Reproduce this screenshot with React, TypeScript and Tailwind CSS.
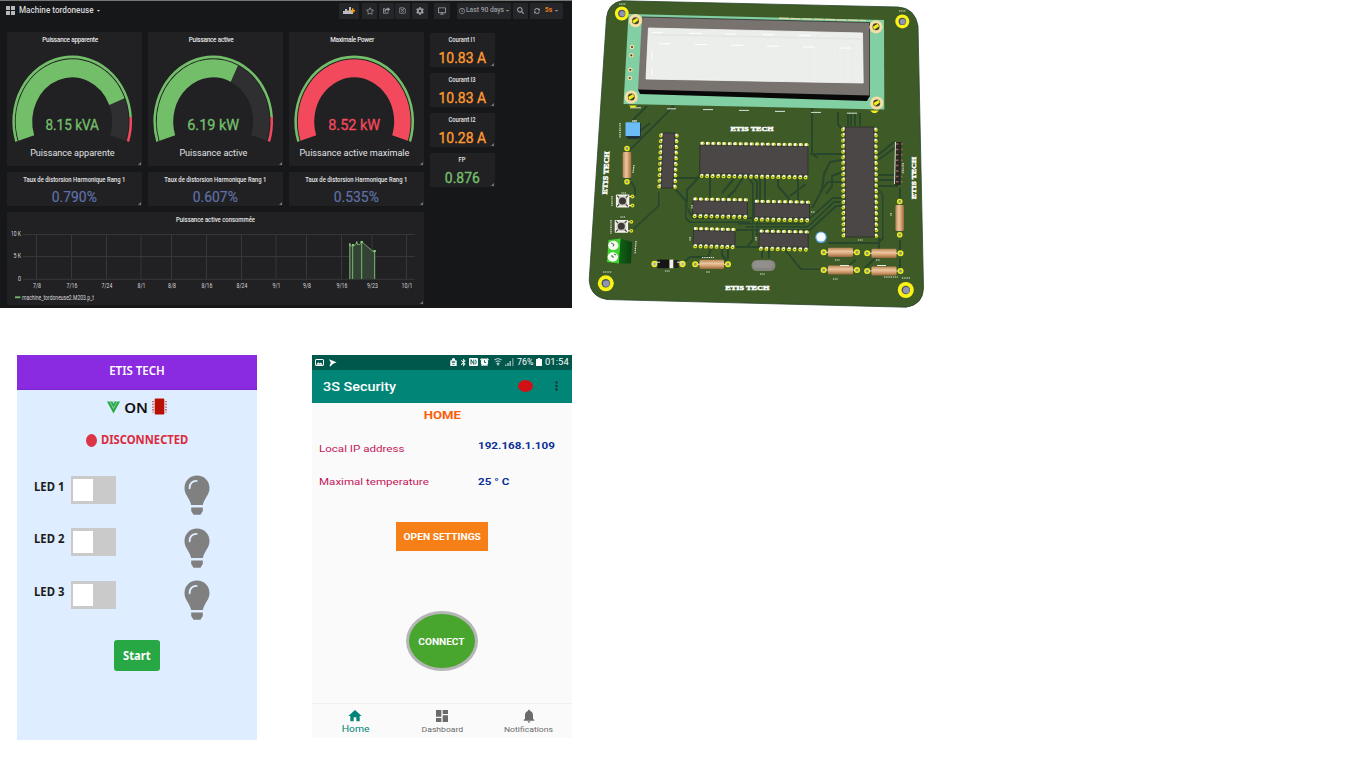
import React from "react";
import {
  FaCog,
  FaDesktop,
  FaRegClock,
  FaRegSave,
  FaRegStar,
  FaSearch,
  FaSyncAlt,
  FaCaretDown,
  FaShareSquare,
} from "react-icons/fa";
import {
  MdBluetooth,
  MdDashboard,
  MdHome,
  MdMoreVert,
  MdNotifications,
} from "react-icons/md";

const GREEN = "#73bf69";
const RED = "#f2495c";

/* ---------- Monitoring dashboard ---------- */

function arc(r: number, from: number, to: number) {
  const p = (a: number) => {
    const t = (a * Math.PI) / 180;
    return `${(-r * Math.cos(t)).toFixed(2)} ${(-r * Math.sin(t)).toFixed(2)}`;
  };
  return `M${p(from)}A${r} ${r} 0 ${to - from > 180 ? 1 : 0} 1 ${p(to)}`;
}

function Corner() {
  return (
    <svg className="absolute right-px bottom-px h-[3px] w-[3px]" viewBox="0 0 3 3">
      <path d="M3 0V3H0Z" fill="#77787a" />
    </svg>
  );
}

type GaugeProps = {
  title: string;
  titleW: number;
  value: string;
  valueW: number;
  label: string;
  labelW: number;
  end: number;
  color: string;
  limit: number;
};

function Gauge(g: GaugeProps) {
  return (
    <div className="relative h-[134px] w-[135px] rounded-[1px] bg-[#212124]">
      <svg className="block h-full w-full" viewBox="0 0 135 134" fontFamily="Roboto, sans-serif" textAnchor="middle">
        <text x="63.2" y="10" fontSize="6.4" fontWeight="500" fill="#e6e6e6" textLength={g.titleW}>{g.title}</text>
        <g transform="translate(65.2 89.5) scale(1 1.103)" fill="none">
          <path d={arc(48.2, -18, 198)} stroke="#2f2f32" strokeWidth="16.4" />
          <path d={arc(48.2, -18, g.end)} stroke={g.color} strokeWidth="16.4" />
          <path d={arc(58.6, -18, g.limit)} stroke={GREEN} strokeWidth="2.5" />
          {g.limit < 198 && <path d={arc(58.6, g.limit, 198)} stroke={RED} strokeWidth="2.5" />}
        </g>
        <text x="65.2" y="98" fontSize="15.2" fill={g.color} stroke={g.color} strokeWidth="0.35" textLength={g.valueW} lengthAdjust="spacingAndGlyphs">{g.value}</text>
        <text x="65.4" y="124.2" fontSize="9.8" fill="#e2e3e4" textLength={g.labelW} lengthAdjust="spacingAndGlyphs">{g.label}</text>
      </svg>
      <Corner />
    </div>
  );
}

function Distortion({ value }: { value: string }) {
  return (
    <div className="relative h-[34px] w-[135px] rounded-[1px] bg-[#212124]">
      <svg className="block h-full w-full" viewBox="0 0 135 34" fontFamily="Roboto, sans-serif" textAnchor="middle">
        <text x="67.3" y="9.6" fontSize="6.4" fontWeight="500" fill="#e6e6e6" textLength="102" lengthAdjust="spacingAndGlyphs">Taux de distorsion Harmonique Rang 1</text>
        <text x="67.3" y="30.3" fontSize="15.2" fill="#5f71a8" stroke="#5f71a8" strokeWidth="0.2" textLength="45" lengthAdjust="spacingAndGlyphs">{value}</text>
      </svg>
      <Corner />
    </div>
  );
}

function Stat({ title, titleW, value, valueW, color }: { title: string; titleW: number; value: string; valueW: number; color: string }) {
  return (
    <div className="relative h-[34px] w-[65px] rounded-[1px] bg-[#212124]">
      <svg className="block h-full w-full" viewBox="0 0 65 34" fontFamily="Roboto, sans-serif" textAnchor="middle">
        <text x="32" y="9.4" fontSize="6.4" fontWeight="500" fill="#e6e6e6" textLength={titleW} lengthAdjust="spacingAndGlyphs">{title}</text>
        <text x="32.3" y="30.2" fontSize="15.4" fill={color} stroke={color} strokeWidth="0.4" textLength={valueW} lengthAdjust="spacingAndGlyphs">{value}</text>
      </svg>
      <Corner />
    </div>
  );
}

const ticks: [number, string][] = [
  [36.5, "7/8"], [71.5, "7/16"], [106.5, "7/24"], [141, "8/1"], [171.5, "8/8"], [206.5, "8/16"],
  [241.5, "8/24"], [276, "9/1"], [306.5, "9/8"], [341.5, "9/16"], [372, "9/23"], [406.5, "10/1"],
];

function Consumption() {
  return (
    <div className="relative h-[93px] w-[417px] rounded-[1px] bg-[#212124]">
      <svg className="block h-full w-full" viewBox="7 212 417 93" fontFamily="Roboto, sans-serif">
        <text x="215.5" y="221.7" fontSize="6.4" fontWeight="500" fill="#e6e6e6" textAnchor="middle" textLength="79" lengthAdjust="spacingAndGlyphs">Puissance active consommée</text>
        <g stroke="#37373a" strokeWidth="1">
          {ticks.map(([x]) => <path key={x} d={`M${x} 234V279`} />)}
          <path d="M23 234.5H415M23 256.5H415M23 279.3H415" />
        </g>
        <g fontSize="6.4" fill="#d8d8d8">
          <text x="11" y="236" textLength="10" lengthAdjust="spacingAndGlyphs">10 K</text>
          <text x="13.5" y="258" textLength="7.5" lengthAdjust="spacingAndGlyphs">5 K</text>
          <text x="18" y="280.7" textLength="3" lengthAdjust="spacingAndGlyphs">0</text>
          <g textAnchor="middle">
            {ticks.map(([x, t]) => (
              <text key={t} x={x + 0.5} y="287.5" textLength={t.length === 4 ? 10.8 : 8} lengthAdjust="spacingAndGlyphs">{t}</text>
            ))}
          </g>
          <text x="22" y="299.6" textLength="72" lengthAdjust="spacingAndGlyphs">machine_tordoneuse2.M203.p_t</text>
        </g>
        <path d="M350 279V244L353 246L356 243L357 244.5L361.5 242L374.5 251V279Z" fill="#334234" />
        <path d="M350 246H354L357 242.5V244.5H360L362 242L373 251.5H375" fill="none" stroke="#73a466" strokeWidth="0.9" />
        <path d="M349.8 279V243.5M352.6 279V244M361.6 279V242M374.6 279V250" stroke="#6fa363" strokeWidth="1.2" />
        <path d="M349 244.5h1.6M352 245h2M356 242.5h1.4M360.5 242h2.5M373.4 251h2.4" stroke="#86c978" strokeWidth="2" />
        <path d="M15 297.3h5.4" stroke={GREEN} strokeWidth="1.8" />
      </svg>
      <Corner />
    </div>
  );
}

function Tool({ className, children }: { className: string; children: React.ReactNode }) {
  return (
    <div className={`flex h-4 items-center justify-center rounded-[1px] bg-[#242629] text-[7px] text-[#9b9da0] ${className}`}>
      {children}
    </div>
  );
}

function Dashboard() {
  return (
    <section className="flex h-[308px] w-[572px] flex-col border-t border-[#777] bg-[#161719] font-[Roboto,sans-serif]">
      <header className="flex h-[31px] items-start pt-[1.5px]">
        <div className="-mt-[0.5px] flex h-4 w-[333px] items-center pl-1.5">
          <svg className="h-[9px] w-[9px]" viewBox="0 0 9 9" fill="#b8b9bb">
            <path d="M0 0h4v4H0zM5 0h4v4H5zM0 5h4v4H0zM5 5h4v4H5z" />
          </svg>
          <span className="ml-1 inline-block w-[75px] origin-left scale-x-[0.905] text-[9px] leading-4 font-medium whitespace-nowrap text-[#d8d9da]">Machine tordoneuse</span>
          <FaCaretDown className="ml-[2px] h-[5px] w-[5px] text-[#d8d9da]" />
        </div>
        <div className="ml-1.5 flex">
          <Tool className="w-5">
            <svg className="h-[9px] w-3" viewBox="0 0 12 9">
              <path d="M1 5v3M3 3v5M5 4.5v3.5M7 1v7M9 5v3" stroke="#d8d9da" strokeWidth="1.7" />
              <path d="M9.7 2.3v4.8M7.3 4.7h4.8" stroke="#f9a11f" strokeWidth="1.5" />
            </svg>
          </Tool>
          <Tool className="ml-[3px] w-[15px]"><FaRegStar className="h-2 w-2" /></Tool>
          <Tool className="ml-[2px] w-[15px]"><FaShareSquare className="h-[7px] w-[7px]" /></Tool>
          <Tool className="ml-[1px] w-[15px]"><FaRegSave /></Tool>
          <Tool className="ml-[2px] w-4"><FaCog className="h-2 w-2" /></Tool>
          <Tool className="ml-[6px] w-4"><FaDesktop className="h-2 w-2" /></Tool>
          <Tool className="ml-[7px] w-[54px]">
            <FaRegClock className="h-1.5 w-1.5 shrink-0" />
            <span className="inline-block w-[38px] origin-left scale-x-[0.99] pl-px text-[6.8px] font-medium whitespace-nowrap">Last 90 days</span>
            <FaCaretDown className="ml-[2px] h-[5px] w-[5px] shrink-0" />
          </Tool>
          <Tool className="ml-[2px] w-[15px]"><FaSearch className="h-[7px] w-[7px]" /></Tool>
          <Tool className="ml-[2px] w-[33px]">
            <FaSyncAlt className="h-1.5 w-1.5" />
            <span className="mr-0.5 ml-[5px] text-[6.8px] font-bold text-[#eb7b18]">5s</span>
            <FaCaretDown className="h-[5px] w-[5px]" />
          </Tool>
        </div>
      </header>
      <div className="flex gap-1.5 pl-[7px]">
        <div className="flex w-[417px] flex-col gap-1.5">
          <div className="flex justify-between">
            <Gauge title="Puissance apparente" titleW={56} value="8.15 kVA" valueW={53.5} label="Puissance apparente" labelW={84.5} end={158} color={GREEN} limit={176} />
            <Gauge title="Puissance active" titleW={45} value="6.19 kW" valueW={52} label="Puissance active" labelW={68} end={116} color={GREEN} limit={176} />
            <Gauge title="Maximale Power" titleW={44} value="8.52 kW" valueW={52} label="Puissance active maximale" labelW={110} end={198} color={RED} limit={198} />
          </div>
          <div className="flex justify-between">
            <Distortion value="0.790%" />
            <Distortion value="0.607%" />
            <Distortion value="0.535%" />
          </div>
          <Consumption />
        </div>
        <div className="flex flex-col gap-1.5 pt-px">
          <Stat title="Courant I1" titleW={27} value="10.83 A" valueW={47.5} color="#ff9830" />
          <Stat title="Courant I3" titleW={27} value="10.83 A" valueW={47.5} color="#ff9830" />
          <Stat title="Courant I2" titleW={27} value="10.28 A" valueW={47.5} color="#ff9830" />
          <Stat title="FP" titleW={7} value="0.876" valueW={35} color={GREEN} />
        </div>
      </div>
    </section>
  );
}

/* ---------- Circuit board ---------- */

function Pad({ x, y }: { x: number; y: number }) {
  return (
    <g>
      <circle cx={x} cy={y} r="1.9" fill="#e6e41f" />
      <circle cx={x} cy={y} r="0.8" fill="#566b2c" />
    </g>
  );
}

function ChipH({ x, y, w, h, n, dy = 1 }: { x: number; y: number; w: number; h: number; n: number; dy?: number }) {
  const step = (w - 4) / (n - 1);
  const pins = Array.from({ length: n }, (_, i) => ({ px: x + 2 + i * step, o: (dy * i) / n }));
  return (
    <g>
      {pins.map(({ px, o }) => (
        <g key={px}>
          <Pad x={px + 0.7} y={y - 1.5 + o} />
          <Pad x={px - 0.4} y={y + h + 2.6 + o} />
          <path d={`M${px - 0.2} ${y - 3 + o}v3.2M${px} ${y + h + o - 0.5}v2.6`} stroke="#fbfbf2" strokeWidth="2.5" />
        </g>
      ))}
      <path d={`M${x} ${y}L${x + w} ${y + dy}V${y + h + dy}L${x - 0.5} ${y + h}Z`} fill="#4b4746" stroke="#232323" strokeWidth="0.6" />
    </g>
  );
}

function ChipV({ x, y, w, h, n, dx = 0 }: { x: number; y: number; w: number; h: number; n: number; dx?: number }) {
  const step = (h - 4) / (n - 1);
  const pins = Array.from({ length: n }, (_, i) => ({ py: y + 2 + i * step, o: (dx * i) / n }));
  return (
    <g>
      {pins.map(({ py, o }) => (
        <g key={py}>
          <Pad x={x - 2 + o} y={py + 0.5} />
          <Pad x={x + w + 1.8 + o} y={py + 0.8} />
          <path d={`M${x - 2 + o} ${py - 0.5}h2.3M${x + w - 0.5 + o} ${py - 0.2}h2.9`} stroke="#fbfbf2" strokeWidth="2.3" />
        </g>
      ))}
      <path d={`M${x} ${y}H${x + w}L${x + w + dx} ${y + h}H${x + dx}Z`} fill="#4b4746" stroke="#232323" strokeWidth="0.6" />
    </g>
  );
}

function ResistorH({ x, y, w = 25 }: { x: number; y: number; w?: number }) {
  return (
    <g>
      <path d={`M${x - 4} ${y}H${x + w + 4}`} stroke="#c9c9b4" strokeWidth="1.2" />
      {[x - 4.3, x + w + 4].map((c) => (
        <circle key={c} cx={c} cy={y} r="2.3" fill="#8d9a72" stroke="#f0ec20" strokeWidth="1.5" />
      ))}
      <rect x={x} y={y - 4.6} width={w} height="9.2" rx="1.4" fill="url(#resH)" />
    </g>
  );
}

function ResistorV({ x, y, h = 26 }: { x: number; y: number; h?: number }) {
  return (
    <g>
      {[y - 3.5, y + h + 3.8].map((c) => (
        <circle key={c} cx={x} cy={c} r="2.1" fill="#8d9a72" stroke="#f0ec20" strokeWidth="1.4" />
      ))}
      <rect x={x - 4.3} y={y} width="8.6" height={h} rx="1.4" fill="url(#resV)" />
    </g>
  );
}

function Screw({ x, y, r }: { x: number; y: number; r: number }) {
  return (
    <g>
      <circle cx={x} cy={y} r={r} fill="#fbf316" />
      <circle cx={x} cy={y} r={r * 0.53} fill="#4b5560" />
      <circle cx={x + 0.4} cy={y + 0.3} r={r * 0.4} fill="#9294b4" />
    </g>
  );
}

function LcdHole({ x, y }: { x: number; y: number }) {
  return (
    <g>
      <circle cx={x} cy={y} r="6.6" fill="#f5dfa6" />
      <circle cx={x} cy={y} r="3.5" fill="#40432a" />
      <path d={`M${x - 3.2} ${y}l5 -3 1.4 2.4 -5 3.6Z`} fill="#f4ec1c" />
    </g>
  );
}

function PushButton({ x, y }: { x: number; y: number }) {
  return (
    <g>
      {[-4.5, 4.5].map((d) => (
        <g key={d}>
          <Pad x={x + 10} y={y + d} />
          <path d={`M${x + 6} ${y + d}h2.5`} stroke="#eee" strokeWidth="1.2" />
        </g>
      ))}
      <rect x={x - 6.6} y={y - 6.4} width="13.4" height="12.8" rx="0.8" fill="#f3f2ea" />
      <rect x={x - 4.6} y={y - 4.6} width="9.2" height="9.2" fill="#c8c7bf" />
      <circle cx={x} cy={y} r="3.5" fill="#3d3938" />
      <path d={`M${x - 5.4} ${y - 5.4}l2 2M${x + 5.4} ${y - 5.4}l-2 2M${x - 5.4} ${y + 5.4}l2 -2M${x + 5.4} ${y + 5.4}l-2 -2`} stroke="#3e3a37" strokeWidth="1.2" />
    </g>
  );
}

function Board() {
  return (
    <svg className="block h-[310px] w-[345px]" viewBox="585 0 345 310">
      <defs>
        <linearGradient id="resH" x1="0" y1="0" x2="0" y2="1">
          <stop offset="0" stopColor="#b78450" />
          <stop offset="0.4" stopColor="#ecc5a0" />
          <stop offset="0.65" stopColor="#d7a475" />
          <stop offset="1" stopColor="#99683c" />
        </linearGradient>
        <linearGradient id="resV" x1="0" y1="0" x2="1" y2="0">
          <stop offset="0" stopColor="#b78450" />
          <stop offset="0.4" stopColor="#ecc5a0" />
          <stop offset="0.65" stopColor="#d7a475" />
          <stop offset="1" stopColor="#99683c" />
        </linearGradient>
        <linearGradient id="term" x1="0" y1="0" x2="1" y2="0">
          <stop offset="0" stopColor="#126317" />
          <stop offset="1" stopColor="#093f0d" />
        </linearGradient>
      </defs>

      <path d="M622 0.8L898 7Q915 8 918 26L923.5 288Q923 305 906 307.2L607 299.5Q590 297 589.2 280L597.8 150L606.5 18Q608 3 622 0.8Z" fill="#3d5a27" stroke="#2c4630" strokeWidth="0.8" />

      {/* traces */}
      <g fill="none" stroke="#27462b" strokeWidth="2">
        <path d="M674 106L630 150M647 106L632 121M650 123L640 131" />
        <path d="M659 192V206L634 229M631 182L635 188V196M676 190L686 201V218L690 222H750" />
        <path d="M676 178H697L701 174M702 174L687 190V208L693 218H752M710 174V198M738 174L722 193M728 197L735 190L745 174" />
        <path d="M746 174L753 184V240L747 247M751 174L757 182V236M760 176V200M765 176V201M778 176V186L790 200M798 176V200M790 196L806 184" />
        <path d="M712 246L708 257H690L684 262M722 247V255L727 261M728 247V259M732 247H760" />
        <path d="M762 248V258M769 248V258M784 248L801 269H820M738 224H804L833 198H842M746 227H808L834 202H842M734 230H810L836 206H842" />
        <path d="M810 154H842M812 108V154L818 158M838 112V124L842 130M848 113V126M851 113V126M855 113V126M860 113V126" />
        <path d="M878 155L894 142M878 160L896 147M878 175H894M878 180H896M878 186H898M900 188V200M878 190L883 195V238L878 243H828" />
        <path d="M842 160L830 162L824 174L822 190L812 208M842 172L832 176V186L826 194M842 182H828L820 192" />
        <path d="M856 260L848 266M879 238V254L865 268M900 240V252M900 258V270" />
      </g>
      <g fill="none" stroke="#4d6b33" strokeWidth="0.5">
        <path d="M675 107L631 151M660 192V206L635 229M687 201V217L691 221H750M754 184V240M739 225H804L834 199M747 228H808L835 203M879 191L884 196V238M785 248L802 268H820" />
      </g>

      {/* LCD module */}
      <path d="M628.5 14L884 20L884.3 109.5L623.5 104Z" fill="#81cfa3" />
      <path d="M642 17L869.5 22.5V97L638 90.5Z" fill="#78736f" />
      <path d="M638 89.5L870 95.5L867 101L640 94Z" fill="#080808" />
      <path d="M642 17L869.5 22.5V97" fill="none" stroke="#2c2c2c" strokeWidth="0.8" />
      <path d="M648.5 28L862.5 33L863.2 83L646 79Z" fill="#ebeeea" stroke="#f8f9f7" strokeWidth="0.8" />
      <path d="M652 34.5L861 39" stroke="#e3e6e6" strokeWidth="1.6" />
      <path d="M652 32.8h11M689 33.3h12M725 34h11M762 34.8h12M799 35.4h12M659 43.8h11M695 44.5h12M731 45.2h12M767 46.2h12M803 47h12M839 48h12M652 51v8M652 69v6" stroke="#fff" strokeWidth="1" />
      <path d="M720 46L690 72M742 46L712 75M810 48V81M838 44V80M845 44V80M852 44V80" stroke="#e7e9e9" strokeWidth="0.6" />
      <path d="M779 18.2L866 20.6" stroke="#dfd9a6" strokeWidth="1.3" strokeDasharray="10 1.5" />
      <path d="M667 108.8h9M703 109.6h10M739 110.4h10M775 111.4h10M811 112.4h10M847 113.2h10M630 107.8h11" stroke="#d8e4d4" strokeWidth="1" />
      <path d="M629 105.5h8l-2.5 2.2h-3ZM870 110.5h9l-3 2.4h-3Z" fill="#f4ec1c" />
      <LcdHole x={635.5} y={20.7} />
      <LcdHole x={631.3} y={97} />
      <LcdHole x={876} y={26.8} />
      <LcdHole x={876.7} y={103} />
      {[[632, 47], [631.3, 55.3], [630.3, 69.8], [629.8, 78]].map(([x, y]) => (
        <g key={y}>
          <circle cx={x} cy={y} r="2.3" fill="#f5dfa6" />
          <circle cx={x} cy={y} r="1.1" fill="#4c4123" />
        </g>
      ))}

      {/* mounting holes */}
      <Screw x={621.8} y={13.5} r={6.9} />
      <Screw x={902.3} y={21.4} r={7} />
      <Screw x={605.8} y={283.3} r={8} />
      <Screw x={905.8} y={290} r={8} />

      {/* chips */}
      <ChipV x={663} y={133} w={12} h={55} n={10} dx={-2} />
      <ChipH x={700} y={145} w={108} h={28.5} n={20} dy={1.5} />
      <ChipV x={845} y={127} w={29} h={110} n={20} dx={0.5} />
      <ChipH x={693} y={200.7} w={54.5} h={13} n={10} />
      <ChipH x={754.5} y={203} w={55} h={14} n={10} />
      <ChipH x={693.5} y={230.3} w={41.5} h={13.5} n={8} />
      <ChipH x={759.2} y={232.8} w={49} h={13.5} n={9} />

      {/* pin header */}
      <path d="M896 142H901.5L900.5 185H895Z" fill="#2b2623" />
      <path d="M895.5 142L894.5 184" stroke="#efefe8" strokeWidth="0.9" />
      {[0, 1, 2, 3, 4, 5, 6, 7].map((i) => (
        <path key={i} d={`M896 ${144 + i * 5.4}h2.5M901 ${144 + i * 5.4}h1.6`} stroke="#8b6b55" strokeWidth="1.5" />
      ))}

      {/* passives */}
      <ResistorV x={627} y={152} />
      <ResistorV x={899.7} y={205} />
      <ResistorH x={699.5} y={264.3} w={24.5} />
      <ResistorH x={828} y={252.3} />
      <ResistorH x={871.5} y={253.3} />
      <ResistorH x={828} y={270} />
      <ResistorH x={871.5} y={271} />
      <circle cx="654.5" cy="264" r="2.4" fill="#b9b9b0" stroke="#f0ec20" strokeWidth="1.5" />
      <circle cx="682.5" cy="264" r="2.4" fill="#b9b9b0" stroke="#f0ec20" strokeWidth="1.5" />
      <rect x="657.5" y="259.6" width="12" height="8.6" fill="#151515" />
      <rect x="669.5" y="259.6" width="4" height="8.6" fill="#f0eee7" />
      <rect x="673.5" y="260" width="5" height="8" fill="#24221f" />
      <path d="M656 262.3h4M677 262.3h5" stroke="#e9e9df" strokeWidth="1.1" />
      <rect x="751.5" y="260" width="24" height="11" rx="5.5" fill="#85847f" />
      <rect x="753" y="261" width="20" height="7" rx="3.5" fill="#908f8b" />
      <circle cx="821" cy="237.3" r="5.8" fill="#55a9e0" />
      <circle cx="821" cy="237" r="4.6" fill="#f5fbff" />
      <path d="M638 121L641 124V137L638 139H628L626 136Z" fill="#20323d" />
      <rect x="625.5" y="122.3" width="14.5" height="13.7" fill="#6cbdf7" />
      <path d="M632 121h5" stroke="#e9ead4" strokeWidth="1.2" />
      <PushButton x={622.5} y={201} />
      <PushButton x={621.3} y={226.3} />
      <path d="M608.5 240L621 238.5L619 263.5L607 262Z" fill="#40d32f" />
      <path d="M620.5 238.8L632 242L631 263.5H619Z" fill="url(#term)" />
      <ellipse cx="613.3" cy="245.5" rx="5.2" ry="4.7" fill="#f3fbef" />
      <ellipse cx="612.8" cy="257" rx="5.2" ry="4.7" fill="#f3fbef" />
      <path d="M611 243l3 1.5-1 2M611 256h2v2M614 254l2 1" stroke="#3b573a" strokeWidth="0.9" fill="none" />

      {/* silkscreen */}
      <g fill="#fff" fontFamily="Liberation Serif, serif" fontWeight="700" fontSize="7" textAnchor="middle" stroke="#fff" strokeWidth="0.5">
        <text x="752" y="131.1" textLength="43" lengthAdjust="spacingAndGlyphs">ETIS TECH</text>
        <text x="747.3" y="289.8" textLength="44" lengthAdjust="spacingAndGlyphs">ETIS TECH</text>
        <text transform="translate(608.2 173) rotate(-87)" textLength="43" lengthAdjust="spacingAndGlyphs">ETIS TECH</text>
        <text transform="translate(916 178) rotate(-90)" textLength="42" lengthAdjust="spacingAndGlyphs">ETIS TECH</text>
      </g>
      <g stroke="#e6eadf" strokeWidth="1.2" strokeDasharray="1.4 0.8" fill="none">
        <path d="M620 123V138M634 165l-1 8M612 196v10M611 220v14M636 241l-1 13M626 193h-5M625 217h-5M665 271h5M702 257.5h12M706 272h4M760 274h5M835 260h5M833 279h5M876 260h4M884 277h14M891 213v3M903 163v11M603 272h9M619 4h7M899 11h7M858 240h5M692 205v4M690 237v4M756 237v4M811 212h4M902 278h8" />
        <path d="M840 265.5h9M877 265.5h9" strokeDasharray="none" />
      </g>
    </svg>
  );
}

/* ---------- LED control page ---------- */

function Bulb() {
  return (
    <svg className="h-[41px] w-[26px]" viewBox="0 0 26 41">
      <path d="M13 0.5C5.8 0.5 0.5 6 0.5 13C0.5 20 5.5 22.5 7.2 30H18.8C20.5 22.5 25.5 20 25.5 13C25.5 6 20.2 0.5 13 0.5Z" fill="#808080" />
      <path d="M7.2 32.5H18.8V36L16.5 39.8H9.5L7.2 36Z" fill="#808080" />
      <path d="M5.6 13.2C5.6 8.5 8.5 6 12.6 5.9" stroke="#deedff" strokeWidth="1.9" fill="none" strokeLinecap="round" />
    </svg>
  );
}

function LedRow({ name }: { name: string }) {
  return (
    <div className="flex h-[52.5px] items-start pl-[17px]">
      <span className="inline-block w-[37px] origin-left scale-x-[0.93] pt-[0.6px] text-[12.2px] leading-[22px] font-bold whitespace-nowrap text-[#1c1c1c]">{name}</span>
      <div className="mt-[0.5px] flex h-7 w-[45px] items-center bg-[#cacaca] pl-[2px]">
        <div className="h-[22px] w-5 bg-white" />
      </div>
      <div className="ml-[68px]"><Bulb /></div>
    </div>
  );
}

function LedPage() {
  return (
    <section className="flex h-[385px] w-[240px] flex-col bg-[#deedff] font-['Noto_Sans','Open_Sans',sans-serif]">
      <header className="flex h-[35px] items-center justify-center border-b border-[#7b25cc] bg-[#8a2be2] pb-[3px] text-[12px] font-semibold text-white">
        <span className="inline-block scale-x-[0.96]">ETIS TECH</span>
      </header>
      <div className="flex h-[34px] items-center justify-center gap-[4px] text-[15px] font-semibold text-[#111]">
        <svg className="h-[13px] w-[13px]" viewBox="0 0 13 13">
          <path d="M0 0.5H13L6.5 12.5Z" fill="#28a745" />
          <path d="M2.9 0.5L6.5 7.6L10.1 0.5" stroke="#b9dfcf" strokeWidth="0.7" fill="none" />
          <path d="M5.4 0.5L6.5 2.9L7.6 0.5Z" fill="#deedff" />
        </svg>
        <span className="inline-block">ON</span>
        <svg className="mb-px h-[17px] w-[15px]" viewBox="0 0 15 17">
          <path d="M1 3V14.5M14 3V14.5" stroke="#c9382e" strokeWidth="1.4" strokeDasharray="1.3 1.4" />
          <rect x="2.7" y="0.5" width="9.6" height="16" rx="1" fill="#b80f05" />
        </svg>
      </div>
      <div className="flex h-8 items-center justify-center gap-1 text-[11.7px] font-bold text-[#dc2a3c]">
        <div className="h-[13px] w-[11px] rounded-[50%] bg-[#dc3545]" />
        <span className="-mr-[2px] inline-block w-[90px] origin-left scale-x-[0.96] whitespace-nowrap">DISCONNECTED</span>
      </div>
      <div className="flex flex-col pt-[19px]">
        <LedRow name="LED 1" />
        <LedRow name="LED 2" />
        <LedRow name="LED 3" />
      </div>
      <button className="mt-[7.5px] flex h-[31px] w-[46px] items-center justify-center self-center rounded-[3px] bg-[#28a745] pt-px text-[12px] font-bold text-white">
        <span className="inline-block scale-x-[0.93]">Start</span>
      </button>
    </section>
  );
}

/* ---------- Security phone app ---------- */

function Tab({ icon, label, active, className }: { icon: React.ReactNode; label: string; active?: boolean; className: string }) {
  return (
    <div className={`flex flex-1 flex-col items-center pt-1 ${active ? "text-[#008577]" : "text-[#6b6b6b]"}`}>
      {icon}
      <span className={`inline-block whitespace-nowrap ${className}`}>{label}</span>
    </div>
  );
}

function StatusIcons() {
  return (
    <>
      <svg className="h-2 w-[7px]" viewBox="0 0 7 8">
        <path d="M0.3 2.6L1.8 2.2C1.9 0.8 2.6 0 3.5 0S5.1 0.8 5.2 2.2L6.7 2.6V8H0.3Z" fill="#fff" />
        <path d="M2.2 3.4h2.6v1.2h-2.6ZM2.3 6.4h2.4" stroke="#00574b" strokeWidth="0.7" fill="none" />
      </svg>
      <MdBluetooth className="ml-[2px] h-[9px] w-[9px]" />
      <svg className="ml-px h-2 w-[9px]" viewBox="0 0 9 8">
        <rect width="9" height="8" rx="1" fill="#fff" />
        <path d="M2 6.5V1.6L4.8 6.3V1.6M6.5 1.8Q8 4 6.5 6.3" stroke="#00574b" strokeWidth="0.9" fill="none" />
      </svg>
      <svg className="ml-[2px] h-2 w-[9px]" viewBox="0 0 9 8">
        <circle cx="4.5" cy="4.2" r="3.6" fill="#fff" />
        <path d="M0.4 2L2.4 0.4M8.6 2L6.6 0.4M1.6 7.7l1-1M7.4 7.7l-1-1" stroke="#fff" strokeWidth="1.2" />
        <path d="M4.5 2.2V4.4H6.2" stroke="#00574b" strokeWidth="0.9" fill="none" />
      </svg>
      <svg className="ml-[5px] h-2 w-2" viewBox="0 0 8 8" fill="none" stroke="#c6dcd9">
        <path d="M0.3 1.8Q4 -0.8 7.7 1.8M1.6 3.7Q4 2 6.4 3.7" strokeWidth="1" />
        <path d="M2.6 5.4L4 4.8L5.4 5.4L4 7.6Z" fill="#c6dcd9" strokeWidth="0.4" />
      </svg>
      <svg className="ml-[3px] h-2 w-[9px]" viewBox="0 0 9 8">
        <path d="M0.8 8V6.5M3 8V5M5.2 8V3" stroke="#b8d2ce" strokeWidth="1.3" />
        <path d="M7.8 8V0.2" stroke="#6e9b95" strokeWidth="1.5" />
      </svg>
    </>
  );
}

function Phone() {
  return (
    <section className="flex h-[383px] w-[260px] flex-col bg-[#fafafa] font-[Roboto,sans-serif]">
      <div className="flex h-[15px] items-center bg-[#00574b] text-[9px] text-white">
        <svg className="ml-[3px] h-[7px] w-[9px]" viewBox="0 0 9 7">
          <rect x="0.5" y="0.5" width="8" height="6" rx="0.6" fill="none" stroke="#fff" strokeWidth="1" />
          <path d="M1.2 5.8L3.2 3.2L4.6 4.6L5.8 3.4L7.8 5.8Z" fill="#fff" />
        </svg>
        <svg className="ml-[5px] h-2 w-2" viewBox="0 0 8 8" fill="#fff"><path d="M0 0.2L7.6 3.2L4.2 4.8L1 7.8L0.6 6.6L1.8 3.8Z" /></svg>
        <div className="ml-auto flex items-center pr-[3px]">
          <StatusIcons />
          <span className="ml-[3px] inline-block w-[19px] origin-left text-[8.8px]">76%</span>
          <svg className="h-2 w-[6px]" viewBox="0 0 6 8">
            <path d="M1.8 0h2.4v1H6v7H0V1h1.8Z" fill="#fff" />
          </svg>
          <span className="ml-[3px] w-6 text-[9.4px] tracking-[0.1px]">01:54</span>
        </div>
      </div>
      <div className="flex h-[33px] items-center bg-[#008577]">
        <span className="ml-[11px] inline-block w-[180px] origin-left scale-x-[1.2] text-[12px] font-medium text-white">3S Security</span>
        <div className="mb-px ml-[15px] h-3 w-[15px] rounded-[50%] bg-[#d01217]" />
        <MdMoreVert className="mb-px ml-[16px] h-[14px] w-[15px] text-[#17332f]" />
      </div>
      <div className="flex h-[25px] items-center justify-center pt-px text-[11.5px] font-bold text-[#fd5d08]">
        <span className="inline-block scale-x-[1.14]">HOME</span>
      </div>
      <div className="flex h-[36px] items-center pl-[6.5px] whitespace-nowrap text-[#c2185b]">
        <span className="inline-block w-[159.5px] pt-[6px] text-[9.8px]"><span className="inline-block origin-left scale-x-[1.18]">Local IP address</span></span>
        <span className="inline-block origin-left scale-x-[1.2] pt-px text-[9.7px] font-bold text-[#0b2f95]">192.168.1.109</span>
      </div>
      <div className="flex h-[36px] items-center pt-px pl-[6.5px] whitespace-nowrap text-[#c2185b]">
        <span className="inline-block w-[159.5px] text-[9.8px]"><span className="inline-block origin-left scale-x-[1.18]">Maximal temperature</span></span>
        <span className="inline-block origin-left scale-x-[1.2] text-[9.7px] font-bold text-[#0b2f95]">25 ° C</span>
      </div>
      <button className="mt-[22px] flex h-[29px] w-[92px] items-center justify-center self-center bg-[#f77f18] pt-0.5 text-[8.5px] font-bold whitespace-nowrap text-white">
        <span className="inline-block scale-x-[1.2]">OPEN SETTINGS</span>
      </button>
      <button className="mt-[60px] mr-px flex h-[60px] w-[72px] items-center justify-center self-center rounded-[50%] border-[3px] border-[#b6b6b6] bg-[#48a52d] pt-0.5 text-[8.5px] font-bold text-white">
        <span className="inline-block scale-x-[1.19]">CONNECT</span>
      </button>
      <nav className="mt-auto flex h-[35px] border-t border-[#f0f0f0]">
        <Tab active icon={<MdHome className="h-4 w-4" />} label="Home" className="scale-x-[1.2] text-[8.6px] leading-[11px]" />
        <Tab icon={<MdDashboard className="h-4 w-4" />} label="Dashboard" className="scale-x-[1.2] text-[7.2px] leading-[11px]" />
        <Tab icon={<MdNotifications className="h-4 w-4" />} label="Notifications" className="scale-x-[1.2] text-[7.2px] leading-[11px]" />
      </nav>
    </section>
  );
}

export default function App() {
  return (
    <main className="flex h-[768px] w-[1366px] flex-col overflow-hidden bg-white">
      <div className="flex h-[355px] items-start gap-[13px]">
        <Dashboard />
        <Board />
      </div>
      <div className="flex items-start gap-[55px] pl-[17px]">
        <LedPage />
        <Phone />
      </div>
    </main>
  );
}
